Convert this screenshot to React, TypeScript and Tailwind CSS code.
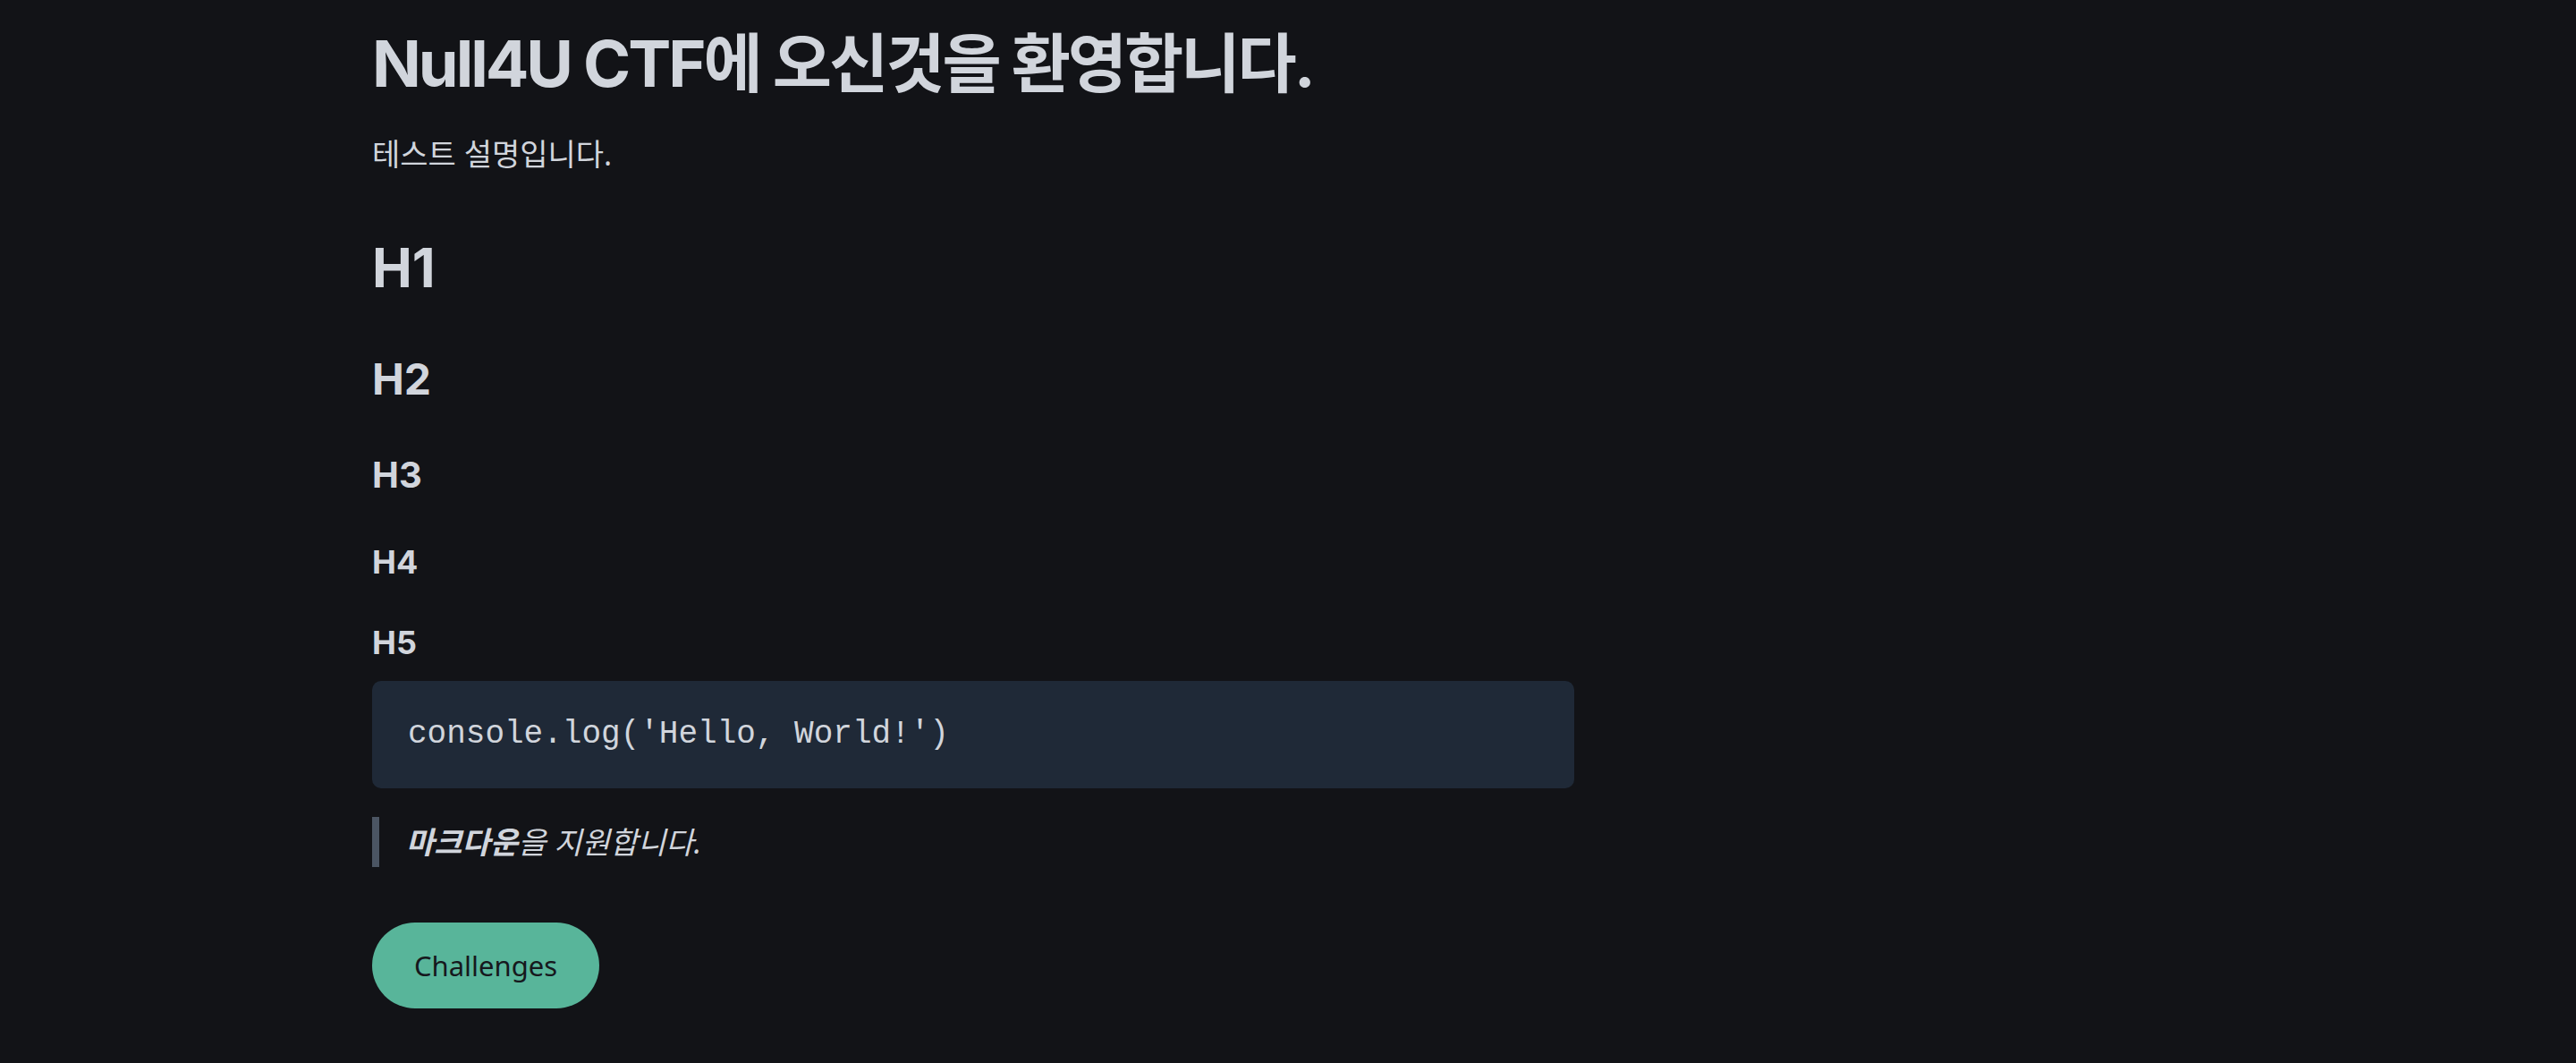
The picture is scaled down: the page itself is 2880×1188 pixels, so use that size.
import React from "react";

const HEAD = "font-['Inter','Noto_Sans_CJK_KR',sans-serif]";
const BODY = "font-['Noto_Sans','Noto_Sans_CJK_KR',sans-serif]";

const headings = [
  { label: "H1", cls: "mt-[67px] text-[60px] leading-[72px]" },
  { label: "H2", cls: "mt-[57px] text-[48px] leading-[64px]" },
  { label: "H3", cls: "mt-[47px] text-[40px] leading-[56px]" },
  { label: "H4", cls: "mt-[41px] text-[36px] leading-[56px]" },
  { label: "H5", cls: "mt-[34px] text-[36px] leading-[56px]" },
];

function App() {
  return (
    <div className="min-h-screen bg-[#121317] text-[#d1d5dc]">
      <main className="pl-[416px] pt-[31px] pb-[60px]">
        <div className="w-[1344px]">
          <h1 className={`${HEAD} text-[72px] leading-[80px] font-bold tracking-[-0.042em]`}>
            Null4U CTF에 오신것을 환영합니다.
          </h1>
          <p className={`${BODY} mt-[37px] text-[34px] leading-[48px]`}>테스트 설명입니다.</p>

          {headings.map((h) => (
            <div key={h.label} className={`${HEAD} ${h.cls} font-bold`}>
              {h.label}
            </div>
          ))}

          <pre className="mt-[15px] flex h-[120px] items-center rounded-[10px] bg-[#1f2937] px-[40px] font-['DejaVu_Sans_Mono',monospace] text-[36px] leading-[56px] text-[#d1d5dc]">
            <code>console.log('Hello, World!')</code>
          </pre>

          <blockquote
            className={`${BODY} mt-[32px] border-l-[8px] border-[#4b5563] pl-[30px] text-[34px] leading-[56px] italic`}
          >
            <strong className="font-bold">마크다운</strong>을 지원합니다.
          </blockquote>

          <button
            className={`${BODY} mt-[62px] h-[96px] w-[254px] rounded-full bg-[#58b59a] text-[31px] text-[#16181d]`}
          >
            Challenges
          </button>
        </div>
      </main>
    </div>
  );
}

export default App;
